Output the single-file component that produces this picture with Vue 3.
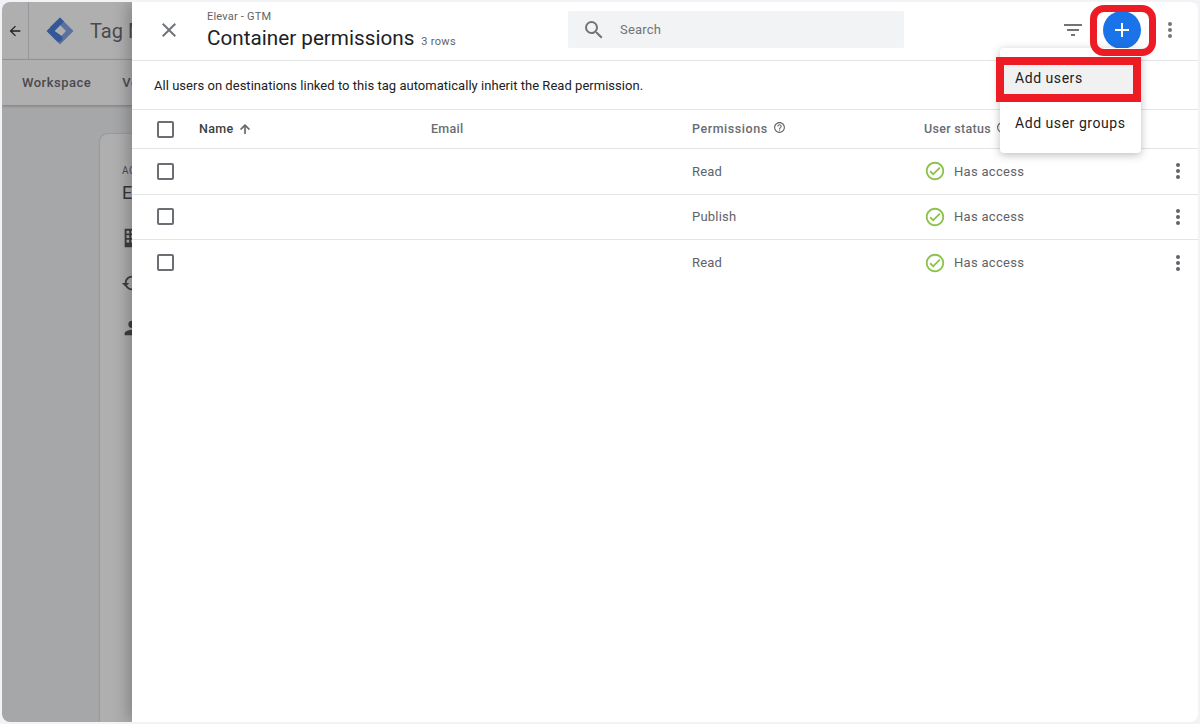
<script setup>
const columns = [
  { label: 'Name', strong: true, sort: true },
  { label: 'Email' },
  { label: 'Permissions', help: true, wide: true },
  { label: 'User status', help: true }
]
const rows = [
  { id: 1, permission: 'Read' },
  { id: 2, permission: 'Publish' },
  { id: 3, permission: 'Read' }
]
</script>

<template>
  <div class="frame">
    <div class="window">
      <!-- page behind the dialog -->
      <div class="behind">
        <div class="topbar">
          <div class="back">
            <svg width="16" height="16" viewBox="0 0 24 24"><path d="M20 11H7.83l5.59-5.59L12 4l-8 8 8 8 1.41-1.41L7.83 13H20v-2z" fill="#202124" /></svg>
          </div>
          <svg class="logo" width="30" height="30" viewBox="0 0 30 30">
            <path d="M15 1.5 28.5 15 15 28.5 11.5 25 21 15 15 9 9 15 5 11z" fill="#7ba0e2" />
            <path d="M15 1.5 1.5 15 11 24.6a3.6 3.6 0 0 0 5.6-.2 3.6 3.6 0 0 0-.2-4.6L9.6 15 19 5.5z" fill="#3f78d8" />
          </svg>
          <span class="product">Tag Manager</span>
        </div>
        <div class="tabs">
          <span>Workspace</span>
          <span>Versions</span>
        </div>
        <div class="content">
          <div class="card">
            <div class="card-label">ACCOUNT</div>
            <div class="card-name">Elevar</div>
            <svg class="card-icon first" width="22" height="22" viewBox="0 0 24 24"><path d="M4 2h16v20H4z M6 4v3h3V4z M6 9v3h3V9z M6 14v3h3v-3z M11 4v3h3V4z M11 9v3h3V9z M11 14v3h3v-3z" fill="#4a4c50" fill-rule="evenodd" /></svg>
            <svg class="card-icon" width="22" height="22" viewBox="0 0 24 24"><path d="M12 4a8 8 0 1 1-7.4 11h2.2A6 6 0 1 0 6 12h3l-4 4-4-4h3a8 8 0 0 1 8-8z" fill="#4a4c50" /></svg>
            <svg class="card-icon" width="22" height="22" viewBox="0 0 24 24"><path d="M12 12a4 4 0 1 0 0-8 4 4 0 0 0 0 8zm0 2c-2.7 0-8 1.3-8 4v2h16v-2c0-2.7-5.3-4-8-4z" fill="#4a4c50" /></svg>
          </div>
        </div>
        <div class="scrim"></div>
      </div>

      <!-- permissions dialog -->
      <div class="panel">
        <header class="panel-head">
          <button class="icon-btn close">
            <svg width="24" height="24" viewBox="0 0 24 24"><path d="M19 6.41 17.59 5 12 10.59 6.41 5 5 6.41 10.59 12 5 17.59 6.41 19 12 13.41 17.59 19 19 17.59 13.41 12z" fill="#70757a" /></svg>
          </button>
          <div class="titles">
            <div class="crumb">Elevar - GTM</div>
            <div class="title-line">
              <span class="title">Container permissions</span>
              <span class="count">3 rows</span>
            </div>
          </div>
          <div class="search">
            <svg width="24" height="24" viewBox="0 0 24 24"><path d="M15.5 14h-.79l-.28-.27A6.47 6.47 0 0 0 16 9.5 6.5 6.5 0 1 0 9.5 16c1.61 0 3.09-.59 4.23-1.57l.27.28v.79l5 4.99L20.49 19l-4.99-5zm-6 0C7.01 14 5 11.99 5 9.5S7.01 5 9.5 5 14 7.01 14 9.5 11.99 14 9.5 14z" fill="#70757a" /></svg>
            <span>Search</span>
          </div>
          <div class="actions">
            <svg class="filter" width="24" height="24" viewBox="0 0 24 24"><path d="M10 18h4v-2h-4v2zM3 6v2h18V6H3zm3 7h12v-2H6v2z" fill="#70757a" /></svg>
            <button class="fab">
              <svg width="24" height="24" viewBox="0 0 24 24"><path d="M19 13h-6v6h-2v-6H5v-2h6V5h2v6h6v2z" fill="#fff" /></svg>
            </button>
            <svg class="more" width="24" height="24" viewBox="0 0 24 24"><path d="M12 8a2 2 0 1 0 0-4 2 2 0 0 0 0 4zm0 2a2 2 0 1 0 0 4 2 2 0 0 0 0-4zm0 6a2 2 0 1 0 0 4 2 2 0 0 0 0-4z" fill="#70757a" /></svg>
          </div>
        </header>

        <div class="notice">All users on destinations linked to this tag automatically inherit the Read permission.</div>

        <div class="table-row table-head">
          <div class="cell-check"><span class="checkbox"></span></div>
          <div v-for="col in columns" :key="col.label" class="head-cell" :class="{ strong: col.strong, wide: col.wide }">
            {{ col.label }}
            <svg v-if="col.sort" width="14" height="14" viewBox="0 0 24 24"><path d="M4 12l1.41 1.41L11 7.83V20h2V7.83l5.58 5.59L20 12l-8-8-8 8z" fill="#5f6368" stroke="#5f6368" stroke-width="1" /></svg>
            <svg v-if="col.help" class="help" width="13" height="13" viewBox="0 0 24 24"><path d="M11 18h2v-2h-2v2zm1-16C6.48 2 2 6.48 2 12s4.48 10 10 10 10-4.48 10-10S17.52 2 12 2zm0 18c-4.41 0-8-3.59-8-8s3.59-8 8-8 8 3.59 8 8-3.59 8-8 8zm0-14c-2.21 0-4 1.79-4 4h2c0-1.1.9-2 2-2s2 .9 2 2c0 2-3 1.75-3 5h2c0-2.25 3-2.5 3-5 0-2.21-1.79-4-4-4z" fill="#5f6368" /></svg>
          </div>
          <div></div>
        </div>

        <div v-for="row in rows" :key="row.id" class="table-row body-row">
          <div class="cell-check"><span class="checkbox"></span></div>
          <div></div>
          <div></div>
          <div class="cell-text">{{ row.permission }}</div>
          <div class="cell-status">
            <svg width="22" height="22" viewBox="0 0 24 24"><path d="M12 2C6.48 2 2 6.48 2 12s4.48 10 10 10 10-4.48 10-10S17.52 2 12 2zm0 18c-4.41 0-8-3.59-8-8s3.59-8 8-8 8 3.59 8 8-3.59 8-8 8zm4.59-12.42L10 14.17l-2.59-2.58L6 13l4 4 8-8-1.41-1.42z" fill="#8bc34a" /></svg>
            <span>Has access</span>
          </div>
          <div class="cell-more">
            <svg width="24" height="24" viewBox="0 0 24 24"><path d="M12 8a2 2 0 1 0 0-4 2 2 0 0 0 0 4zm0 2a2 2 0 1 0 0 4 2 2 0 0 0 0-4zm0 6a2 2 0 1 0 0 4 2 2 0 0 0 0-4z" fill="#5f6368" /></svg>
          </div>
        </div>

        <!-- dropdown and the red callouts sit over the dialog -->
        <div class="menu">
          <div class="menu-item active">Add users</div>
          <div class="menu-item">Add user groups</div>
        </div>
        <div class="callout callout-fab"></div>
        <div class="callout callout-item"></div>
      </div>
    </div>
  </div>
</template>

<style>
body {
  margin: 0;
}
</style>

<style scoped>
.frame {
  width: 1200px;
  height: 724px;
  box-sizing: border-box;
  padding: 2px;
  background: #f3f3f7;
  font-family: Roboto, "Liberation Sans", sans-serif;
  overflow: hidden;
}
.window {
  display: flex;
  width: 100%;
  height: 100%;
  border-radius: 8px;
  overflow: hidden;
  background: #fff;
}

/* page behind the dialog */
.behind {
  position: relative;
  flex: 0 0 130px;
  display: flex;
  flex-direction: column;
  background: #f1f3f4;
  overflow: hidden;
}
.topbar {
  display: flex;
  align-items: center;
  flex: 0 0 58px;
  box-sizing: border-box;
  background: #fff;
  border-bottom: 1px solid #dadce0;
  white-space: nowrap;
}
.back {
  display: flex;
  align-items: center;
  flex: 0 0 27px;
  height: 100%;
  box-sizing: border-box;
  padding-left: 5px;
  border-right: 1px solid #dadce0;
}
.logo {
  margin-left: 16px;
  flex: none;
}
.product {
  margin-left: 15px;
  font-size: 20px;
  color: #5f6368;
}
.tabs {
  display: flex;
  gap: 31px;
  flex: 0 0 45px;
  align-items: center;
  box-sizing: border-box;
  padding-left: 20px;
  background: #fff;
  font-size: 13px;
  font-weight: 500;
  letter-spacing: 0.5px;
  color: #5f6368;
  white-space: nowrap;
  box-shadow: 0 1px 3px rgba(60, 64, 67, 0.4);
}
.content {
  flex: 1;
  padding: 29px 0 0 98px;
}
.card {
  width: 300px;
  height: 100%;
  box-sizing: border-box;
  padding: 31px 0 0 22px;
  background: #fff;
  border-radius: 8px 8px 0 0;
  box-shadow: 0 0 2px rgba(60, 64, 67, 0.4);
  color: #3c4043;
  white-space: nowrap;
}
.card-label {
  font-size: 10px;
  letter-spacing: 0.6px;
  color: #5f6368;
}
.card-name {
  margin-top: 6px;
  font-size: 18px;
}
.card-icon {
  display: block;
  margin: 23px 0 0 -1px;
}
.card-icon.first {
  margin-top: 24px;
}
.scrim {
  position: absolute;
  inset: 0;
  background: rgba(32, 33, 36, 0.36);
}

/* dialog */
.panel {
  position: relative;
  flex: 1;
  min-width: 0;
  background: #fff;
  box-shadow: -4px 0 14px rgba(32, 33, 36, 0.3);
  color: #3c4043;
}
.panel-head {
  display: flex;
  align-items: center;
  height: 59px;
  box-sizing: border-box;
  padding-bottom: 2px;
  border-bottom: 1px solid #e3e4e6;
}
.icon-btn {
  padding: 0;
  border: 0;
  background: none;
  display: flex;
}
.close {
  margin-left: 25px;
}
.titles {
  margin-left: 26px;
  margin-top: 6px;
  flex: 0 0 361px;
}
.crumb {
  font-size: 11px;
  line-height: 14px;
  letter-spacing: 0.2px;
  color: #5f6368;
  margin-top: -5px;
}
.title-line {
  display: flex;
  align-items: baseline;
  gap: 7px;
  margin-top: 1px;
}
.title {
  font-size: 20.7px;
  line-height: 26px;
  color: #202124;
}
.count {
  font-size: 11px;
  letter-spacing: 0.3px;
  color: #5f6368;
}
.search {
  display: flex;
  align-items: center;
  gap: 14px;
  width: 336px;
  height: 37px;
  box-sizing: border-box;
  padding-left: 14px;
  margin-top: -1px;
  background: #f1f3f4;
  border-radius: 2px;
  font-size: 13px;
  letter-spacing: 0.2px;
  color: #70757a;
}
.actions {
  display: flex;
  align-items: center;
  margin-left: auto;
  padding-right: 16px;
}
.filter {
  margin-right: 18px;
}
.fab {
  display: flex;
  align-items: center;
  justify-content: center;
  width: 38px;
  height: 38px;
  padding: 0;
  border: 0;
  border-radius: 50%;
  background: #1a73e8;
  margin-right: 17px;
}
.notice {
  display: flex;
  align-items: center;
  height: 49px;
  box-sizing: border-box;
  padding-left: 22px;
  border-bottom: 1px solid #e3e4e6;
  font-size: 13px;
  letter-spacing: 0.03px;
  color: #202124;
}
.table-row {
  display: grid;
  grid-template-columns: 67px 232px 261px 232px 1fr 40px;
  align-items: center;
  box-sizing: border-box;
}
.table-head {
  height: 39px;
  border-bottom: 1px solid #e3e4e6;
}
.body-row {
  height: 45.6px;
  border-bottom: 1px solid #e3e4e6;
  font-size: 13px;
}
.body-row:nth-last-child(4) {
  border-bottom: 0;
}
.cell-check {
  padding-left: 25px;
  display: flex;
}
.checkbox {
  width: 17px;
  height: 17px;
  box-sizing: border-box;
  border: 2px solid #6b6e72;
  border-radius: 2px;
}
.head-cell {
  display: flex;
  align-items: center;
  gap: 5px;
  padding-bottom: 1px;
  font-size: 12.5px;
  font-weight: 500;
  letter-spacing: 0.3px;
  color: #6a6d71;
}
.head-cell.strong {
  color: #3c4043;
}
.head-cell.wide {
  letter-spacing: 0.55px;
}
.help {
  margin-top: -3px;
}
.cell-text {
  letter-spacing: 0.2px;
  color: #5f6368;
}
.cell-status {
  display: flex;
  align-items: center;
  gap: 8px;
  letter-spacing: 0.3px;
  color: #5f6368;
}
.cell-more {
  display: flex;
  justify-content: center;
}

.menu {
  position: absolute;
  top: 46px;
  left: 868px;
  width: 141px;
  height: 105px;
  box-sizing: border-box;
  padding-top: 17px;
  background: #fff;
  border-radius: 4px;
  box-shadow: 0 2px 8px rgba(60, 64, 67, 0.35);
}
.menu-item {
  display: flex;
  align-items: center;
  box-sizing: border-box;
  height: 29px;
  margin-bottom: 16px;
  padding: 0 0 3px 15px;
  font-size: 14px;
  letter-spacing: 0.55px;
  color: #202124;
}
.menu-item.active {
  background: #f1f1f1;
}
.callout {
  position: absolute;
  box-sizing: border-box;
  border-style: solid;
  border-color: #ed1c24;
}
.callout-fab {
  top: 3px;
  left: 958px;
  width: 66px;
  height: 51px;
  border-width: 7px;
  border-radius: 14px;
}
.callout-item {
  top: 55px;
  left: 864px;
  width: 145px;
  height: 45px;
  border-width: 8px;
}
</style>
